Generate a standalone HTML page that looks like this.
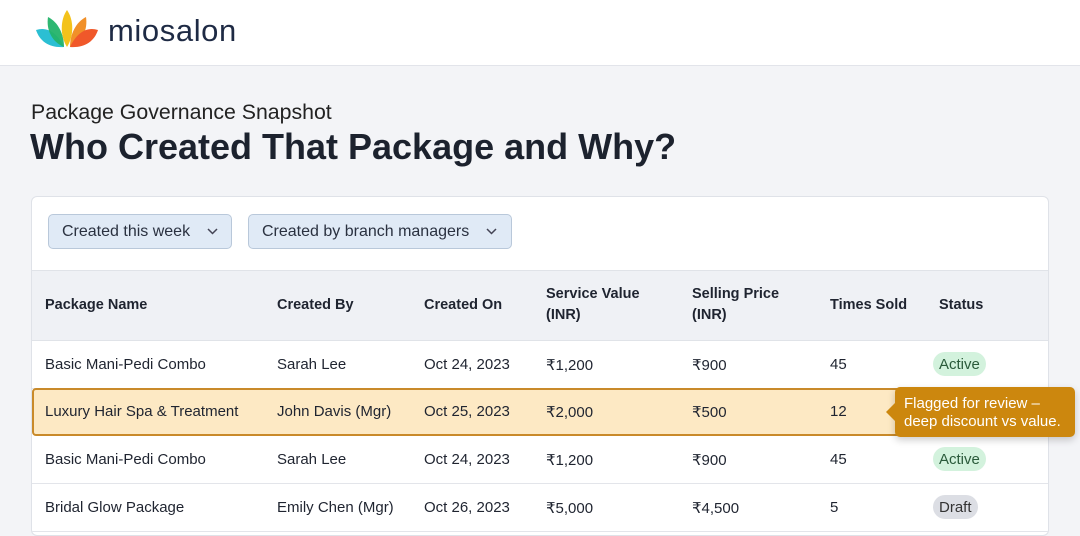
<!DOCTYPE html>
<html><head><meta charset="utf-8"><style>
*{box-sizing:border-box;margin:0;padding:0}
body{width:1080px;height:528px;overflow:hidden;background:#f3f4f7;font-family:"Liberation Sans",sans-serif;color:#1f2430;position:relative}
.top{position:absolute;left:0;top:0;width:1080px;height:66px;background:#fff;border-bottom:1px solid #e2e4ea}
.logo{position:absolute;left:108px;top:13px;font-size:31px;color:#1e2a44;letter-spacing:0.6px}
h2{position:absolute;left:31px;top:100px;font-size:21.3px;font-weight:400;color:#222}
h1{position:absolute;left:30px;top:126px;font-size:36px;font-weight:700;color:#1c222e}
.card{position:absolute;left:31px;top:196px;width:1018px;height:340px;background:#fff;border:1px solid #dfe2e8;border-radius:6px;overflow:hidden}
.f{position:absolute;top:17px;height:35px;background:#e0eaf6;border:1px solid #b9c8da;border-radius:5px;font-size:16px;color:#2a3140;line-height:33px;padding-left:13px}
.f svg{position:absolute;top:13px}
.thead{position:absolute;left:0;top:73px;width:1018px;height:71px;background:#eff1f5;border-top:1px solid #e0e3e8;border-bottom:1px solid #e0e3e8}
.c{position:absolute;font-size:15px}
.th{font-weight:700;font-size:14.5px;line-height:21px}
.row{position:absolute;left:0;width:1018px;height:48px;border-bottom:1px solid #e3e5ea}
.row .c{top:15px}
.hl{background:#fde9c4;border:2px solid #c98a2a;border-radius:4px;left:0;width:1018px}
.b{position:absolute;top:11px;height:24px;border-radius:12px;font-size:15px;line-height:26px;padding:0 6px}
.tip{position:absolute;left:895px;top:387px;width:180px;height:50px;background:#cc870e;border-radius:5px;color:#fff;font-size:15px;line-height:18px;padding:8px 9px;box-shadow:0 3px 8px rgba(0,0,0,.2)}
.tip:before{content:"";position:absolute;left:-9px;top:16px;border:9px solid transparent;border-left:0;border-right-color:#cc870e}
</style></head><body>
<div class="top">
<svg style="position:absolute;left:34px;top:10px" width="66" height="40" viewBox="0 0 66 40">
<path d="M2 20 C14 16 24 24 30 37 C16 38 6 32 2 20Z" fill="#2bbfd3"/>
<path d="M14 7 C24 12 30 24 30 37 C18 32 12 20 14 7Z" fill="#23b36a" opacity=".95"/>
<path d="M33 0 C40 10 40 26 33 37 C26 26 26 10 33 0Z" fill="#f3c21b"/>
<path d="M52 7 C54 20 48 32 36 37 C36 24 42 12 52 7Z" fill="#f08a1e" opacity=".95"/>
<path d="M64 20 C60 32 50 38 36 37 C42 24 52 16 64 20Z" fill="#f0582a"/>
</svg>
<div class="logo">miosalon</div>
</div>
<h2>Package Governance Snapshot</h2>
<h1>Who Created That Package and Why?</h1>
<div class="card">
<div class="f" style="left:16px;width:184px">Created this week<svg style="left:158px" width="11" height="7"><path d="M1 1l4.5 4.5L10 1" stroke="#445" stroke-width="1.5" fill="none"/></svg></div>
<div class="f" style="left:216px;width:264px">Created by branch managers<svg style="left:237px" width="11" height="7"><path d="M1 1l4.5 4.5L10 1" stroke="#445" stroke-width="1.5" fill="none"/></svg></div>
<div class="thead">
<div class="c th" style="left:13px;top:24px">Package Name</div>
<div class="c th" style="left:245px;top:24px">Created By</div>
<div class="c th" style="left:392px;top:24px">Created On</div>
<div class="c th" style="left:514px;top:13px">Service Value<br>(INR)</div>
<div class="c th" style="left:660px;top:13px">Selling Price<br>(INR)</div>
<div class="c th" style="left:798px;top:24px">Times Sold</div>
<div class="c th" style="left:907px;top:24px">Status</div>
</div>
<div class="row" style="top:144px"><div class="c" style="left:13px">Basic Mani-Pedi Combo</div><div class="c" style="left:245px">Sarah Lee</div><div class="c" style="left:392px">Oct 24, 2023</div><div class="c" style="left:514px">₹1,200</div><div class="c" style="left:660px">₹900</div><div class="c" style="left:798px">45</div><div class="b" style="left:901px;background:#d3f2dd;color:#2a5a3a">Active</div></div>
<div class="row hl" style="top:191px;height:48px"><div class="c" style="left:11px;top:13px">Luxury Hair Spa &amp; Treatment</div><div class="c" style="left:243px;top:13px">John Davis (Mgr)</div><div class="c" style="left:390px;top:13px">Oct 25, 2023</div><div class="c" style="left:512px;top:13px">₹2,000</div><div class="c" style="left:658px;top:13px">₹500</div><div class="c" style="left:796px;top:13px">12</div></div>
<div class="row" style="top:239px"><div class="c" style="left:13px">Basic Mani-Pedi Combo</div><div class="c" style="left:245px">Sarah Lee</div><div class="c" style="left:392px">Oct 24, 2023</div><div class="c" style="left:514px">₹1,200</div><div class="c" style="left:660px">₹900</div><div class="c" style="left:798px">45</div><div class="b" style="left:901px;background:#d3f2dd;color:#2a5a3a">Active</div></div>
<div class="row" style="top:287px"><div class="c" style="left:13px">Bridal Glow Package</div><div class="c" style="left:245px">Emily Chen (Mgr)</div><div class="c" style="left:392px">Oct 26, 2023</div><div class="c" style="left:514px">₹5,000</div><div class="c" style="left:660px">₹4,500</div><div class="c" style="left:798px">5</div><div class="b" style="left:901px;background:#dcdee4;color:#333">Draft</div></div>
</div>
<div class="tip">Flagged for review –<br>deep discount vs value.</div>
</body></html>
